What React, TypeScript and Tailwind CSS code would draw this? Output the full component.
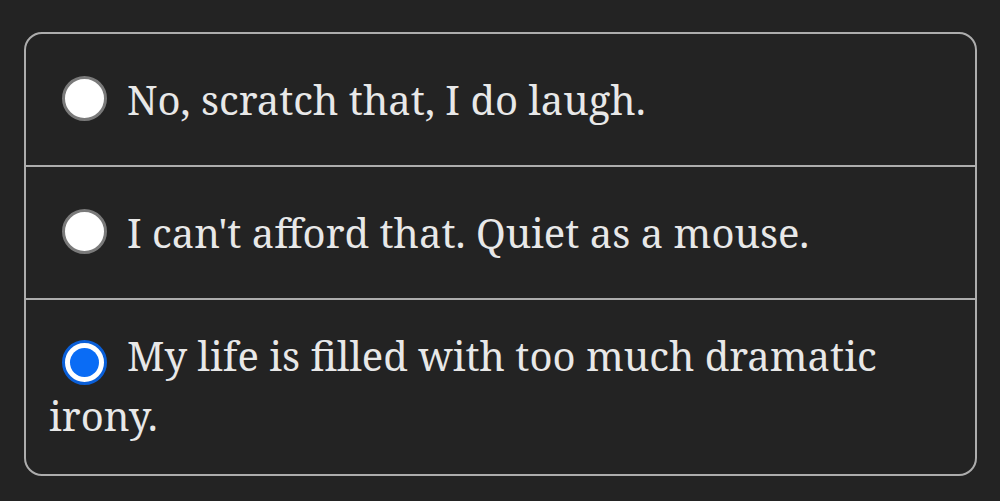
import React from "react";

type Option = { label: string; checked?: boolean };

const options: Option[] = [
  { label: "No, scratch that, I do laugh." },
  { label: "I can't afford that. Quiet as a mouse." },
  { label: "My life is filled with too much dramatic irony.", checked: true },
];

function Radio({ checked }: { checked?: boolean }) {
  if (checked) {
    return (
      <span className="mr-[20px] ml-[13px] inline-flex h-[45px] w-[45px] items-center justify-center rounded-full border-[3px] border-[#0a5fd8] bg-white align-[-6px]">
        <span className="h-[29px] w-[29px] rounded-full bg-[#0a6cf5]" />
      </span>
    );
  }
  return (
    <span className="mr-[20px] ml-[13px] inline-block h-[45px] w-[45px] rounded-full border-[3px] border-[#7a7a7a] bg-white align-[-6px]" />
  );
}

export default function App() {
  return (
    <div className="min-h-[501px] w-full bg-[#232323] pt-8 pr-[23px] pb-6 pl-6" style={{ fontFamily: '"Noto Serif", "DejaVu Serif", serif' }}>
      <div className="overflow-hidden rounded-[18px] border-2 border-[#adadad]">
        {options.map((o, i) => (
          <label
            key={o.label}
            className={`flex items-center px-[23px] ${i < options.length - 1 ? "min-h-[133px] border-b-2 border-[#adadad] py-[24px]" : "pt-[26px] pb-[28px]"}`}
          >
            <span className="block text-[40px] leading-[60px] text-[#e8e8e8]">
              <Radio checked={o.checked} />
              {o.label}
            </span>
          </label>
        ))}
      </div>
    </div>
  );
}
